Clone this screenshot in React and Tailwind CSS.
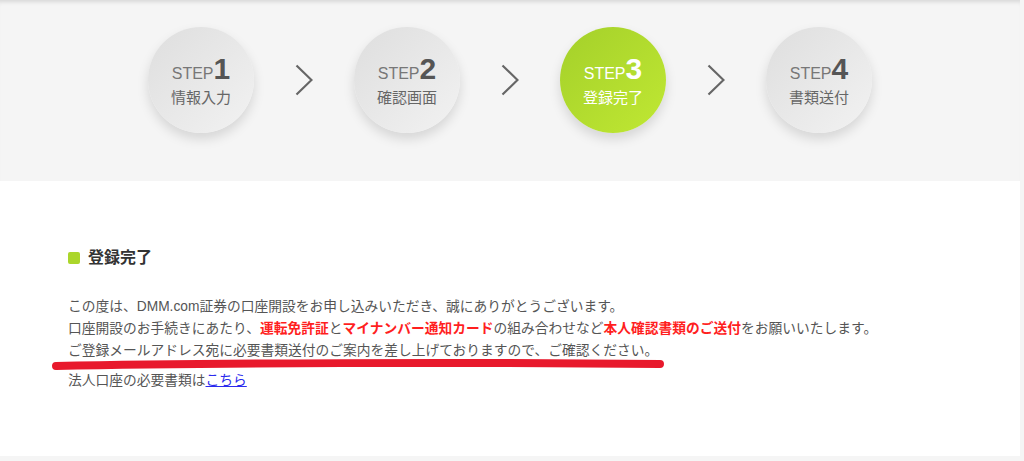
const STEPS = [
  { num: "1", label: "情報入力" },
  { num: "2", label: "確認画面" },
  { num: "3", label: "登録完了", active: true },
  { num: "4", label: "書類送付" },
];

function Chevron() {
  return (
    <svg width="18" height="32" viewBox="0 0 18 32" className="shrink-0">
      <path d="M1.5 1.5 L16.5 16 L1.5 30.5" fill="none" stroke="#666" strokeWidth="2.2" />
    </svg>
  );
}

function StepCircle({ num, label, active }) {
  return (
    <div
      className={`w-[106px] h-[106px] rounded-full flex flex-col items-center justify-center shrink-0 shadow-[0_6px_12px_rgba(0,0,0,0.13)] ${
        active
          ? "bg-gradient-to-br from-[#a4d02a] to-[#c0e833] text-white"
          : "bg-gradient-to-br from-[#dedede] to-[#f2f2f2] text-[#666]"
      }`}
    >
      <div className="flex items-baseline leading-none -mt-[2px]">
        <span className={`text-[16px] ${active ? "text-white" : "text-[#777]"}`}>STEP</span>
        <span className={`text-[30px] font-bold ${active ? "text-white" : "text-[#555]"}`}>{num}</span>
      </div>
      <div className="text-[15px] leading-none mt-[6px]">{label}</div>
    </div>
  );
}

export default function App() {
  return (
    <div
      className="w-[1024px] h-[461px] bg-[#f5f5f5] overflow-hidden"
      style={{ fontFamily: '"Liberation Sans", "Noto Sans CJK JP", sans-serif' }}
    >
      {/* ── Step header ── */}
      <div className="h-[181px] w-[1020px] shadow-[inset_0_5px_4px_-3px_rgba(0,0,0,0.12)] pt-[27px]">
        <div className="flex items-center justify-center gap-[41px]">
          {STEPS.map((s, i) => (
            <div key={s.num} className="contents">
              {i > 0 && <Chevron />}
              <StepCircle {...s} />
            </div>
          ))}
        </div>
      </div>

      {/* ── Complete panel ── */}
      <div className="w-[1020px] h-[275px] bg-white pt-[65px] pl-[68px]">
        <h2 className="flex items-center gap-[8px] text-[16px] leading-[24px] font-bold text-[#333]">
          <span className="w-[12px] h-[12px] bg-[#abd62b] rounded-[2px]" />
          登録完了
        </h2>

        <div className="relative mt-[26px] text-[13.75px] leading-[22px] text-[#555]">
          <p>この度は、DMM.com証券の口座開設をお申し込みいただき、誠にありがとうございます。</p>
          <p>
            口座開設のお手続きにあたり、
            <span className="font-bold text-[#ff1f1f]">運転免許証</span>と
            <span className="font-bold text-[#ff1f1f]">マイナンバー通知カード</span>の組み合わせなど
            <span className="font-bold text-[#ff1f1f]">本人確認書類のご送付</span>をお願いいたします。
          </p>
          <p>ご登録メールアドレス宛に必要書類送付のご案内を差し上げておりますので、ご確認ください。</p>
          <p className="mt-[8px]">
            法人口座の必要書類は
            <a href="#" className="text-[#2b2bee] underline">こちら</a>
          </p>

          {/* hand-drawn red underline */}
          <svg
            className="absolute left-[-16px] top-[61px] pointer-events-none"
            width="620"
            height="16"
            viewBox="0 0 620 16"
          >
            <path
              d="M4 9 C 150 6, 420 5, 608 7"
              fill="none"
              stroke="#e8192c"
              strokeWidth="8"
              strokeLinecap="round"
            />
          </svg>
        </div>
      </div>
    </div>
  );
}
